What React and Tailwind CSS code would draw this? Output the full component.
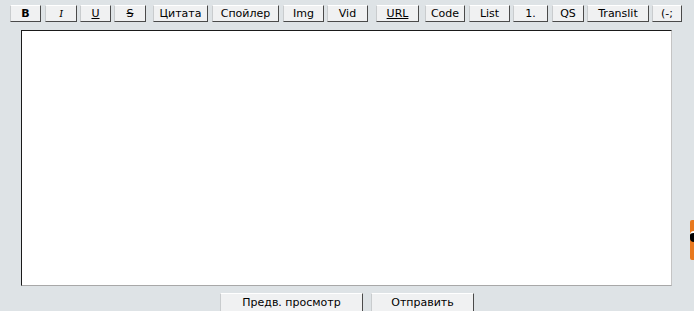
const tools = [
  { label: 'B', w: 'w-[31px]', ml: 'ml-0', cls: 'font-bold' },
  { label: 'I', w: 'w-[32px]', ml: 'ml-[4px]', cls: 'italic font-serif' },
  { label: 'U', w: 'w-[31px]', ml: 'ml-[3px]', cls: 'underline' },
  { label: 'S', w: 'w-[32px]', ml: 'ml-[3px]', cls: 'line-through' },
  { label: 'Цитата', w: 'w-[55px]', ml: 'ml-[7px]', cls: '' },
  { label: 'Спойлер', w: 'w-[67px]', ml: 'ml-[4px]', cls: '' },
  { label: 'Img', w: 'w-[41px]', ml: 'ml-[4px]', cls: '' },
  { label: 'Vid', w: 'w-[41px]', ml: 'ml-[3px]', cls: '' },
  { label: 'URL', w: 'w-[43px]', ml: 'ml-[8px]', cls: 'underline' },
  { label: 'Code', w: 'w-[40px]', ml: 'ml-[6px]', cls: '' },
  { label: 'List', w: 'w-[41px]', ml: 'ml-[4px]', cls: '' },
  { label: '1.', w: 'w-[35px]', ml: 'ml-[3px]', cls: '' },
  { label: 'QS', w: 'w-[32px]', ml: 'ml-[4px]', cls: '' },
  { label: 'Translit', w: 'w-[62px]', ml: 'ml-[3px]', cls: '' },
  { label: '(-;', w: 'w-[30px]', ml: 'ml-[3px]', cls: '' },
];

function Btn({ children, className }) {
  return (
    <button
      className={`shrink-0 h-[17px] flex items-center justify-center bg-[#f0f1f2] text-[11px] leading-none text-black border border-t-[#ffffff] border-l-[#c9ccce] border-r-[#4a4a4a] border-b-[#4a4a4a] ${className}`}
    >
      {children}
    </button>
  );
}

export default function App() {
  return (
    <div
      className="relative w-[694px] h-[311px] overflow-hidden bg-[#dee3e6]"
      style={{ fontFamily: '"DejaVu Sans", Verdana, sans-serif' }}
    >
      {/* Toolbar */}
      <div className="flex pl-[10px] pt-[5px]">
        {tools.map(t => (
          <Btn key={t.label} className={`${t.w} ${t.ml}`}>
            <span className={t.cls}>{t.label}</span>
          </Btn>
        ))}
      </div>

      {/* Message box */}
      <div className="ml-[21px] mt-[8px] w-[651px] h-[256px] bg-white border border-t-[#1a1a1a] border-l-[#1a1a1a] border-r-[#c4c4c4] border-b-[#a8a8a8]" />

      {/* Submit buttons */}
      <div className="flex pl-[220px] mt-[7px]">
        <Btn className="w-[143px] h-[19px] text-[11px]">Предв. просмотр</Btn>
        <Btn className="w-[103px] h-[19px] ml-[8px] text-[11px]">Отправить</Btn>
      </div>

      {/* Partial side widget */}
      <div className="absolute left-[690px] top-[220px] w-[6px] h-[40px] bg-[#e8781e] rounded-l-[2px]">
        <div className="mt-[11px] w-[4px] h-[11px] bg-black rounded-l-full border-t-2 border-white" />
      </div>
    </div>
  );
}
